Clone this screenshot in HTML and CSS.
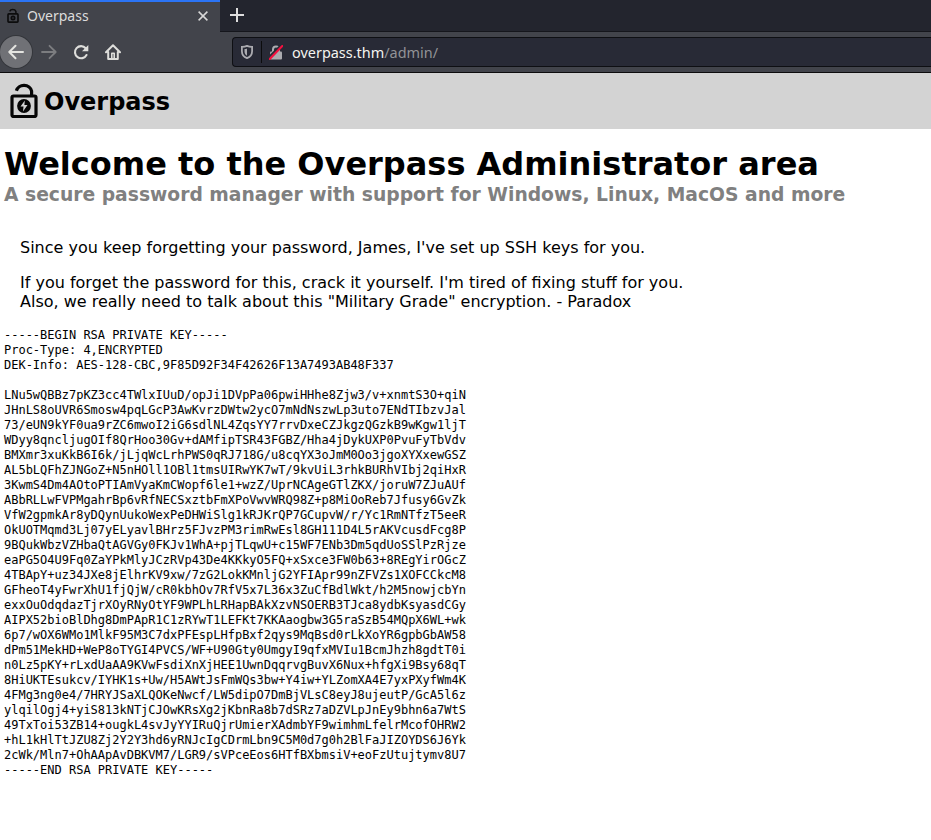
FILE: index.html
```html
<!DOCTYPE html>
<html lang="en">
<head>
<meta charset="utf-8">
<title>Overpass</title>
<link rel="stylesheet" href="styles.css">
</head>
<body>
<div class="tabbar">
  <div class="tab">
    <svg class="favicon" width="12" height="15" viewBox="0 0 28 36" fill="none" stroke="#0c0c0d"><path d="M6 8a8 6.5 0 0 1 15 0v5" stroke-width="3.5"/><rect x="2" y="14" width="24" height="20" rx="2" stroke-width="4"/><circle cx="14" cy="24" r="4" stroke-width="4"/></svg>
    <span class="tab-title">Overpass</span>
    <svg class="close" width="10" height="10" viewBox="0 0 10 10" stroke="#d8d8d8" stroke-width="1.5"><path d="M.6.6l8.8 8.8M9.4.6L.6 9.4"/></svg>
  </div>
  <svg class="plus" width="14" height="14" viewBox="0 0 14 14" stroke="#dedede" stroke-width="2"><path d="M7 0v14M0 7h14"/></svg>
</div>
<div class="toolbar">
  <div class="back"><svg width="16" height="16" viewBox="0 0 16 16" fill="none" stroke="#e4e4e0" stroke-width="2" stroke-linecap="round" stroke-linejoin="round"><path d="M15 8H1.5M7.5 1.8L1.3 8l6.2 6.2"/></svg></div>
  <svg class="forward" width="16" height="16" viewBox="0 0 16 16" fill="none" stroke="#7c7d80" stroke-width="1.8" stroke-linecap="round" stroke-linejoin="round"><path d="M1 8h13.5M8.5 1.8L14.7 8l-6.2 6.2"/></svg>
  <svg class="reload" width="16" height="16" viewBox="0 0 16 16"><path d="M12.7 4.2A6.1 6.1 0 1 0 13.5 11" fill="none" stroke="#dededb" stroke-width="2.1" stroke-linecap="round"/><path d="M15.3 1v6.2H9z" fill="#dededb"/></svg>
  <svg class="home" width="16" height="16" viewBox="0 0 16 16" fill="none" stroke="#dededb" stroke-width="2" stroke-linecap="round" stroke-linejoin="round"><path d="M1 8.3L8 1.3l7 7M3.2 8v7h9.6V8"/><path d="M6.8 14V9.3h2.4V14" stroke-width="1.6"/></svg>
  <div class="urlbar">
    <svg class="shield" width="12" height="14" viewBox="0 0 12 14"><path d="M6 .9C4.5 1.6 2.7 1.9.9 1.9v4.3c0 3.4 2 5.7 5.1 6.9 3.1-1.2 5.1-3.5 5.1-6.9V1.9C9.3 1.9 7.5 1.6 6 .9z" fill="none" stroke="#ababb0" stroke-width="1.8"/><path d="M6 3.4c-.8.3-1.6.5-2.5.6v2.5c0 1.9.9 3.3 2.5 4.2z" fill="#ababb0"/></svg>
    <span class="divider"></span>
    <svg class="insecure" width="14" height="15" viewBox="0 0 14 15"><path d="M4 7V4.5a3 3 0 0 1 6 0V7" fill="none" stroke="#ababb0" stroke-width="2"/><rect x="1" y="6.5" width="12" height="8" rx="1" fill="#ababb0"/><path d="M-.5 12.5L12 .2" stroke="#282a36" stroke-width="2"/><path d="M.7 14L13.3 1" stroke="#f4103f" stroke-width="2.1" stroke-linecap="round"/></svg>
    <span class="url">overpass.thm<span class="path">/admin/</span></span>
  </div>
</div>
<header class="site-header">
  <svg class="logo" width="28" height="36" viewBox="0 0 28 36"><path d="M6.4 8.8a7.8 7.2 0 0 1 15.2 .4V14" fill="none" stroke="#060606" stroke-width="3.2"/><rect x="2" y="14" width="24" height="20.500" rx="1.5" fill="none" stroke="#060606" stroke-width="3.2"/><circle cx="14" cy="24" r="6.9" fill="#060606"/><path d="M14.8 18.5l-4.3 6.1h3l-.5 5 4.5-6.5h-3.1z" fill="#d3d3d3"/></svg>
  <span class="brand">Overpass</span>
</header>
<main>
  <h1>Welcome to the Overpass Administrator area</h1>
  <h2>A secure password manager with support for Windows, Linux, MacOS and more</h2>
  <div class="message">
    <p>Since you keep forgetting your password, James, I've set up SSH keys for you.</p>
    <p>If you forget the password for this, crack it yourself. I'm tired of fixing stuff for you.<br>Also, we really need to talk about this "Military Grade" encryption. - Paradox</p>
  </div>
<pre>-----BEGIN RSA PRIVATE KEY-----
Proc-Type: 4,ENCRYPTED
DEK-Info: AES-128-CBC,9F85D92F34F42626F13A7493AB48F337

LNu5wQBBz7pKZ3cc4TWlxIUuD/opJi1DVpPa06pwiHHhe8Zjw3/v+xnmtS3O+qiN
JHnLS8oUVR6Smosw4pqLGcP3AwKvrzDWtw2ycO7mNdNszwLp3uto7ENdTIbzvJal
73/eUN9kYF0ua9rZC6mwoI2iG6sdlNL4ZqsYY7rrvDxeCZJkgzQGzkB9wKgw1ljT
WDyy8qncljugOIf8QrHoo30Gv+dAMfipTSR43FGBZ/Hha4jDykUXP0PvuFyTbVdv
BMXmr3xuKkB6I6k/jLjqWcLrhPWS0qRJ718G/u8cqYX3oJmM0Oo3jgoXYXxewGSZ
AL5bLQFhZJNGoZ+N5nHOll1OBl1tmsUIRwYK7wT/9kvUiL3rhkBURhVIbj2qiHxR
3KwmS4Dm4AOtoPTIAmVyaKmCWopf6le1+wzZ/UprNCAgeGTlZKX/joruW7ZJuAUf
ABbRLLwFVPMgahrBp6vRfNECSxztbFmXPoVwvWRQ98Z+p8MiOoReb7Jfusy6GvZk
VfW2gpmkAr8yDQynUukoWexPeDHWiSlg1kRJKrQP7GCupvW/r/Yc1RmNTfzT5eeR
OkUOTMqmd3Lj07yELyavlBHrz5FJvzPM3rimRwEsl8GH111D4L5rAKVcusdFcg8P
9BQukWbzVZHbaQtAGVGy0FKJv1WhA+pjTLqwU+c15WF7ENb3Dm5qdUoSSlPzRjze
eaPG5O4U9Fq0ZaYPkMlyJCzRVp43De4KKkyO5FQ+xSxce3FW0b63+8REgYirOGcZ
4TBApY+uz34JXe8jElhrKV9xw/7zG2LokKMnljG2YFIApr99nZFVZs1XOFCCkcM8
GFheoT4yFwrXhU1fjQjW/cR0kbhOv7RfV5x7L36x3ZuCfBdlWkt/h2M5nowjcbYn
exxOuOdqdazTjrXOyRNyOtYF9WPLhLRHapBAkXzvNSOERB3TJca8ydbKsyasdCGy
AIPX52bioBlDhg8DmPApR1C1zRYwT1LEFKt7KKAaogbw3G5raSzB54MQpX6WL+wk
6p7/wOX6WMo1MlkF95M3C7dxPFEspLHfpBxf2qys9MqBsd0rLkXoYR6gpbGbAW58
dPm51MekHD+WeP8oTYGI4PVCS/WF+U90Gty0UmgyI9qfxMVIu1BcmJhzh8gdtT0i
n0Lz5pKY+rLxdUaAA9KVwFsdiXnXjHEE1UwnDqqrvgBuvX6Nux+hfgXi9Bsy68qT
8HiUKTEsukcv/IYHK1s+Uw/H5AWtJsFmWQs3bw+Y4iw+YLZomXA4E7yxPXyfWm4K
4FMg3ng0e4/7HRYJSaXLQOKeNwcf/LW5dipO7DmBjVLsC8eyJ8ujeutP/GcA5l6z
ylqilOgj4+yiS813kNTjCJOwKRsXg2jKbnRa8b7dSRz7aDZVLpJnEy9bhn6a7WtS
49TxToi53ZB14+ougkL4svJyYYIRuQjrUmierXAdmbYF9wimhmLfelrMcofOHRW2
+hL1kHlTtJZU8Zj2Y2Y3hd6yRNJcIgCDrmLbn9C5M0d7g0h2BlFaJIZOYDS6J6Yk
2cWk/Mln7+OhAApAvDBKVM7/LGR9/sVPceEos6HTfBXbmsiV+eoFzUtujtymv8U7
-----END RSA PRIVATE KEY-----</pre>
</main>
</body>
</html>
```

FILE: styles.css
```css
* { box-sizing: border-box; }
body { margin: 0; background: #fff; color: #000; font-family: "DejaVu Sans", sans-serif; font-size: 16px; overflow: hidden; }
svg { display: block; flex: none; }
.tabbar { display: flex; align-items: center; height: 32px; background: #23252e; border-bottom: 1px solid #15161c; }
.tab { display: flex; align-items: center; width: 220px; height: 32px; margin-bottom: -1px; padding: 0 12px 0 7px; background: #42444b; border-top: 2px solid #2b74f5; }
.favicon { margin-top: -4px; }
.tab-title { margin-left: 8px; font: 14px/20px "Noto Sans", sans-serif; color: #dcdcdc; margin-top: -2px; }
.close { margin-left: auto; margin-top: -2px; }
.plus { margin-left: 10px; margin-top: -1px; }
.toolbar { display: flex; align-items: center; height: 41px; background: #42444b; border-bottom: 1px solid #0c0c0d; }
.back { display: flex; align-items: center; justify-content: center; width: 32px; height: 32px; border-radius: 50%; background: #707176; box-shadow: 0 0 0 1px #34363b; }
.forward { margin-left: 9px; }
.reload { margin-left: 16px; }
.home { margin-left: 16px; }
.urlbar { display: flex; align-items: center; flex: 1; height: 30px; margin-left: 111px; padding-left: 8px; background: #282a36; border: 1px solid #0e0f13; border-right: 0; border-radius: 4px 0 0 4px; }
.divider { width: 1px; height: 22px; margin-left: 8px; background: #0c0c0d; }
.insecure { margin-left: 7px; }
.url { margin: 2px 0 0 9px; font: 14.45px/20px "Noto Sans", sans-serif; color: #f4f4f0; }
.path { color: #929397; }
.site-header { display: flex; align-items: center; height: 56px; padding-left: 10px; background: #d3d3d3; }
.logo { margin-top: -2px; }
.brand { margin: 2px 0 0 6px; font-size: 24px; font-weight: bold; line-height: 28px; }
main { padding: 16px 4px 0; }
h1 { margin: 0; font-size: 32px; line-height: 38px; white-space: nowrap; }
h2 { margin: 0; padding-top: 1px; font-size: 18.73px; line-height: 22px; color: #808080; white-space: nowrap; }
.message { padding: 32px 16px 0; }
.message p { margin: 0 0 16px; line-height: 19px; }
pre { margin: 17px 0 0; font: 12px/15px "DejaVu Sans Mono", monospace; letter-spacing: -0.008px; }
.message p:last-child { margin: 0; }
```
